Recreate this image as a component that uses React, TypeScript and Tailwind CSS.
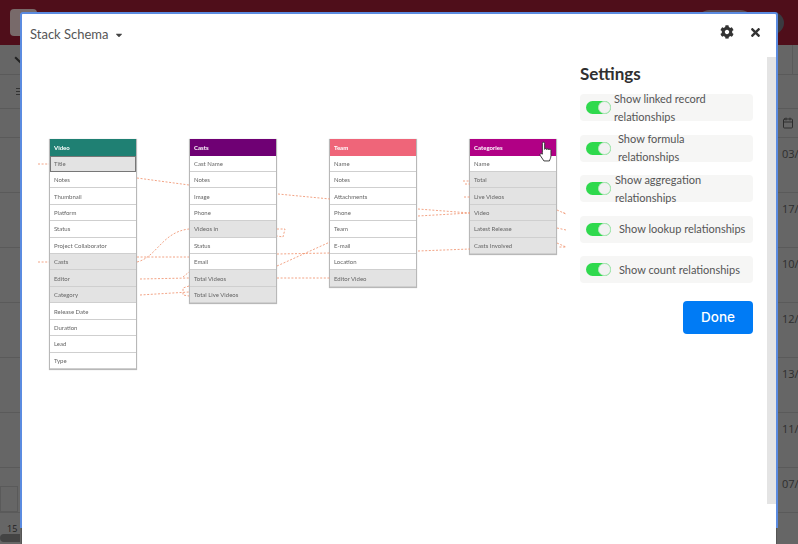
import { Calendar } from "lucide-react"
import { FaCog, FaTimes, FaCaretDown } from "react-icons/fa"

type Field = { name: string; gray?: boolean; active?: boolean }
type Schema = { title: string; headerClass: string; fields: Field[] }

const schemas: Schema[] = [
  {
    title: "Video",
    headerClass: "bg-[#1f8073]",
    fields: [
      { name: "Title", gray: true, active: true },
      { name: "Notes" },
      { name: "Thumbnail" },
      { name: "Platform" },
      { name: "Status" },
      { name: "Project Collaborator" },
      { name: "Casts", gray: true },
      { name: "Editor", gray: true },
      { name: "Category", gray: true },
      { name: "Release Date" },
      { name: "Duration" },
      { name: "Lead" },
      { name: "Type" },
    ],
  },
  {
    title: "Casts",
    headerClass: "bg-[#6f0074]",
    fields: [
      { name: "Cast Name" },
      { name: "Notes" },
      { name: "Image" },
      { name: "Phone" },
      { name: "Videos in", gray: true },
      { name: "Status" },
      { name: "Email" },
      { name: "Total Videos", gray: true },
      { name: "Total Live Videos", gray: true },
    ],
  },
  {
    title: "Team",
    headerClass: "bg-[#ef6579]",
    fields: [
      { name: "Name" },
      { name: "Notes" },
      { name: "Attachments" },
      { name: "Phone" },
      { name: "Team" },
      { name: "E-mail" },
      { name: "Location" },
      { name: "Editor Video", gray: true },
    ],
  },
  {
    title: "Categories",
    headerClass: "bg-[#b10085]",
    fields: [
      { name: "Name" },
      { name: "Total", gray: true },
      { name: "Live Videos", gray: true },
      { name: "Video", gray: true },
      { name: "Latest Release", gray: true },
      { name: "Casts Involved", gray: true },
    ],
  },
]

// link paths, relative to the canvas (page x - 22, page y - 57)
const links = [
  "M16 107 L27 107",
  "M115 121 L167 128",
  "M115 205 C135 200 140 175 167 172",
  "M115 200 L167 200",
  "M16 205 L27 205",
  "M118 222 L167 221",
  "M161 220 L167 215",
  "M118 238 L167 235",
  "M167 229 L161 231 L161 238 L167 239",
  "M256 137 L308 142",
  "M255 172 L263 172 L261 180 L255 179",
  "M255 209 L308 185",
  "M255 197 L308 196",
  "M255 221 L308 221",
  "M396 152 L448 156",
  "M396 159 L448 156",
  "M396 194 L448 192",
  "M441 124 L448 124",
  "M443 127 L448 127",
  "M442 140 L448 140",
  "M535 153 L544 157 L540 155",
  "M535 171 L544 173",
  "M535 186 L544 190 L536 190",
]

const settings = [
  { lines: ["Show linked record", "relationships"], textClass: "ml-[3px]" },
  { lines: ["Show formula", "relationships"], textClass: "ml-[7px]" },
  { lines: ["Show aggregation", "relationships"], textClass: "ml-[4px]" },
  { lines: ["Show lookup relationships"], textClass: "ml-[8px]" },
  { lines: ["Show count relationships"], textClass: "ml-[8px]" },
]

function SchemaTable({ schema }: { schema: Schema }) {
  return (
    <div className="w-[88px] border-x-[1.5px] border-b-[1.5px] border-[#b8b8b8] shadow-[0_0_1px_#ccc]">
      <div className={`h-[16.5px] flex items-center pl-[4px] text-[6px] font-bold text-white ${schema.headerClass}`}>
        {schema.title}
      </div>
      {schema.fields.map((field) => (
        <div
          key={field.name}
          className={`h-[16.43px] flex items-center pl-[4px] text-[6px] text-[#666] border-b border-[#cfcfcf] ${
            field.gray ? "bg-[#e3e3e3]" : "bg-white"
          } ${field.active ? "outline outline-[1px] outline-[#777] -outline-offset-1" : ""}`}
        >
          {field.name}
        </div>
      ))}
    </div>
  )
}

function HandCursor() {
  return (
    <svg className="absolute left-[517px] top-[84px] w-[13px] h-[21px]" viewBox="0 0 12 20">
      <path
        d="M3 11 V2.2 a1.1 1.1 0 0 1 2.2 0 V8 a1 1 0 0 1 2 .2 a1 1 0 0 1 2 .3 a1 1 0 0 1 2 .5 V14 c0 2 -1 3.5 -1.5 5 H4.5 C3.5 17 1.8 15.5 .8 13.5 c-.5 -1.2 1 -2 2.2 -1 z"
        fill="#fff"
        stroke="#333"
        strokeWidth="0.9"
        strokeLinejoin="round"
      />
    </svg>
  )
}

function SchemaCanvas() {
  return (
    <div className="relative w-[558px] shrink-0 h-full blur-[0.4px]">
      <div className="flex items-start gap-[52px] pl-[27px] pt-[82px]">
        {schemas.map((schema) => (
          <SchemaTable key={schema.title} schema={schema} />
        ))}
      </div>
      <svg className="absolute inset-0 w-[558px] h-[400px]" viewBox="0 0 558 400" fill="none">
        {links.map((d) => (
          <path key={d} d={d} stroke="#f09a78" strokeWidth="0.9" strokeDasharray="2 1.6" />
        ))}
      </svg>
      <HandCursor />
    </div>
  )
}

function Toggle() {
  return (
    <div className="w-[25px] h-[13px] shrink-0 rounded-full bg-[#2fd94d] flex justify-end">
      <div className="w-[13px] h-[13px] rounded-full bg-[#f2f2f2] border border-[#b5e6bd]" />
    </div>
  )
}

function SettingsPanel() {
  return (
    <div className="w-[173px] shrink-0 pt-[6px]">
      <h2 className="text-[17px] leading-[22px] font-bold text-[#2f2f2f] mb-[9px]">Settings</h2>
      <div className="flex flex-col gap-[13.5px]">
        {settings.map((item) => (
          <div key={item.lines[0]} className="h-[27px] bg-[#f6f6f5] rounded-[4px] flex items-center pl-[6px]">
            <Toggle />
            <div className={`${item.textClass} text-[11px] leading-[18px] text-[#555] whitespace-nowrap`}>
              {item.lines.map((line) => (
                <div key={line}>{line}</div>
              ))}
            </div>
          </div>
        ))}
      </div>
      <div className="flex justify-end mt-[18px]">
        <button className="w-[70px] h-[33px] rounded-[4px] bg-[#007bf5] text-white text-[13.5px] font-medium [font-family:Inter,sans-serif]">
          Done
        </button>
      </div>
    </div>
  )
}

function SchemaModal() {
  return (
    <div className="absolute left-[20px] top-[12px] w-[758px] h-[532px] flex flex-col [font-family:Lato,sans-serif]">
      <div className="h-[516px] shrink-0 bg-white border-x-2 border-t-2 border-[#5b8be0] rounded-t-[3px] flex flex-col">
        <div className="h-[43px] shrink-0 flex items-center pl-[8px] pr-[14px] pb-[5px] text-[#555]">
          <span className="text-[13px] mt-[4px]">Stack Schema</span>
          <FaCaretDown className="ml-[5px] mt-[4px] w-[10px] h-[10px] text-[#444]" />
          <FaCog className="ml-auto -mt-[2px] w-[14px] h-[14px] text-[#333]" />
          <FaTimes className="ml-[15px] -mt-[2px] w-[13px] h-[13px] text-[#333]" />
        </div>
        <div className="flex flex-1 min-h-0">
          <SchemaCanvas />
          <SettingsPanel />
          <div className="ml-auto w-[9px] h-[447px] bg-[#e4e4e4]" />
        </div>
      </div>
      <div className="flex-1 mx-px bg-white border-x border-[#555]" />
    </div>
  )
}

function DateCell({ text }: { text: string }) {
  return <div className="pl-[782px] pt-[7px] text-[11px] leading-[18px] text-[#2e2e2e]">{text}</div>
}

export default function App() {
  return (
    <div className="relative h-[544px] overflow-hidden bg-[#666] [font-family:'Open_Sans',sans-serif]">
      {/* dimmed page behind the modal */}
      <header className="h-[45px] bg-[#4f0e1a] flex items-center pl-[10px] pr-[14px]">
        <div className="w-[27px] h-[27px] rounded-[4px] bg-[#786a6a]" />
        <div className="ml-auto w-[56px] h-[25px] rounded-full bg-[#5c4a50]" />
        <div className="ml-[9px] w-[22px] h-[22px] rounded-full bg-[#3a3a40]" />
      </header>
      <div className="h-[30px] border-b border-[#5a5a5a] flex items-center">
        <div className="ml-[14px] w-[8px] h-[2px] rotate-45 bg-[#222]" />
        <div className="ml-[770px] w-px h-full bg-[#5a5a5a]" />
      </div>
      <div className="h-[34px] border-b border-[#5a5a5a] flex items-center pl-[16px]">
        <div className="w-[5px] flex flex-col gap-[1.5px]">
          <div className="h-[1.5px] bg-[#333]" />
          <div className="h-[1.5px] bg-[#333]" />
          <div className="h-[1.5px] bg-[#333]" />
        </div>
      </div>
      <div className="h-[29px] border-b border-[#5a5a5a] flex items-center justify-end pr-[4px]">
        <Calendar className="w-[12px] h-[12px] text-[#2e2e2e]" />
      </div>
      {["03/", "17/", "10/", "12/", "13/", "11/"].map((date) => (
        <div key={date} className="h-[55px] border-b border-[#5a5a5a]">
          <DateCell text={date} />
        </div>
      ))}
      <div className="h-[45px] border-b border-[#5a5a5a] relative">
        <DateCell text="07/" />
        <div className="absolute left-0 bottom-0 w-[18px] h-[26px] border border-[#5a5a5a]" />
      </div>
      <div className="pl-[7px] pt-[11px] text-[9px] leading-[9px] text-[#222]">15</div>
      <div className="mt-[1px] w-[20px] h-[8px] rounded-l-full bg-[#444]" />

      <SchemaModal />
    </div>
  )
}
